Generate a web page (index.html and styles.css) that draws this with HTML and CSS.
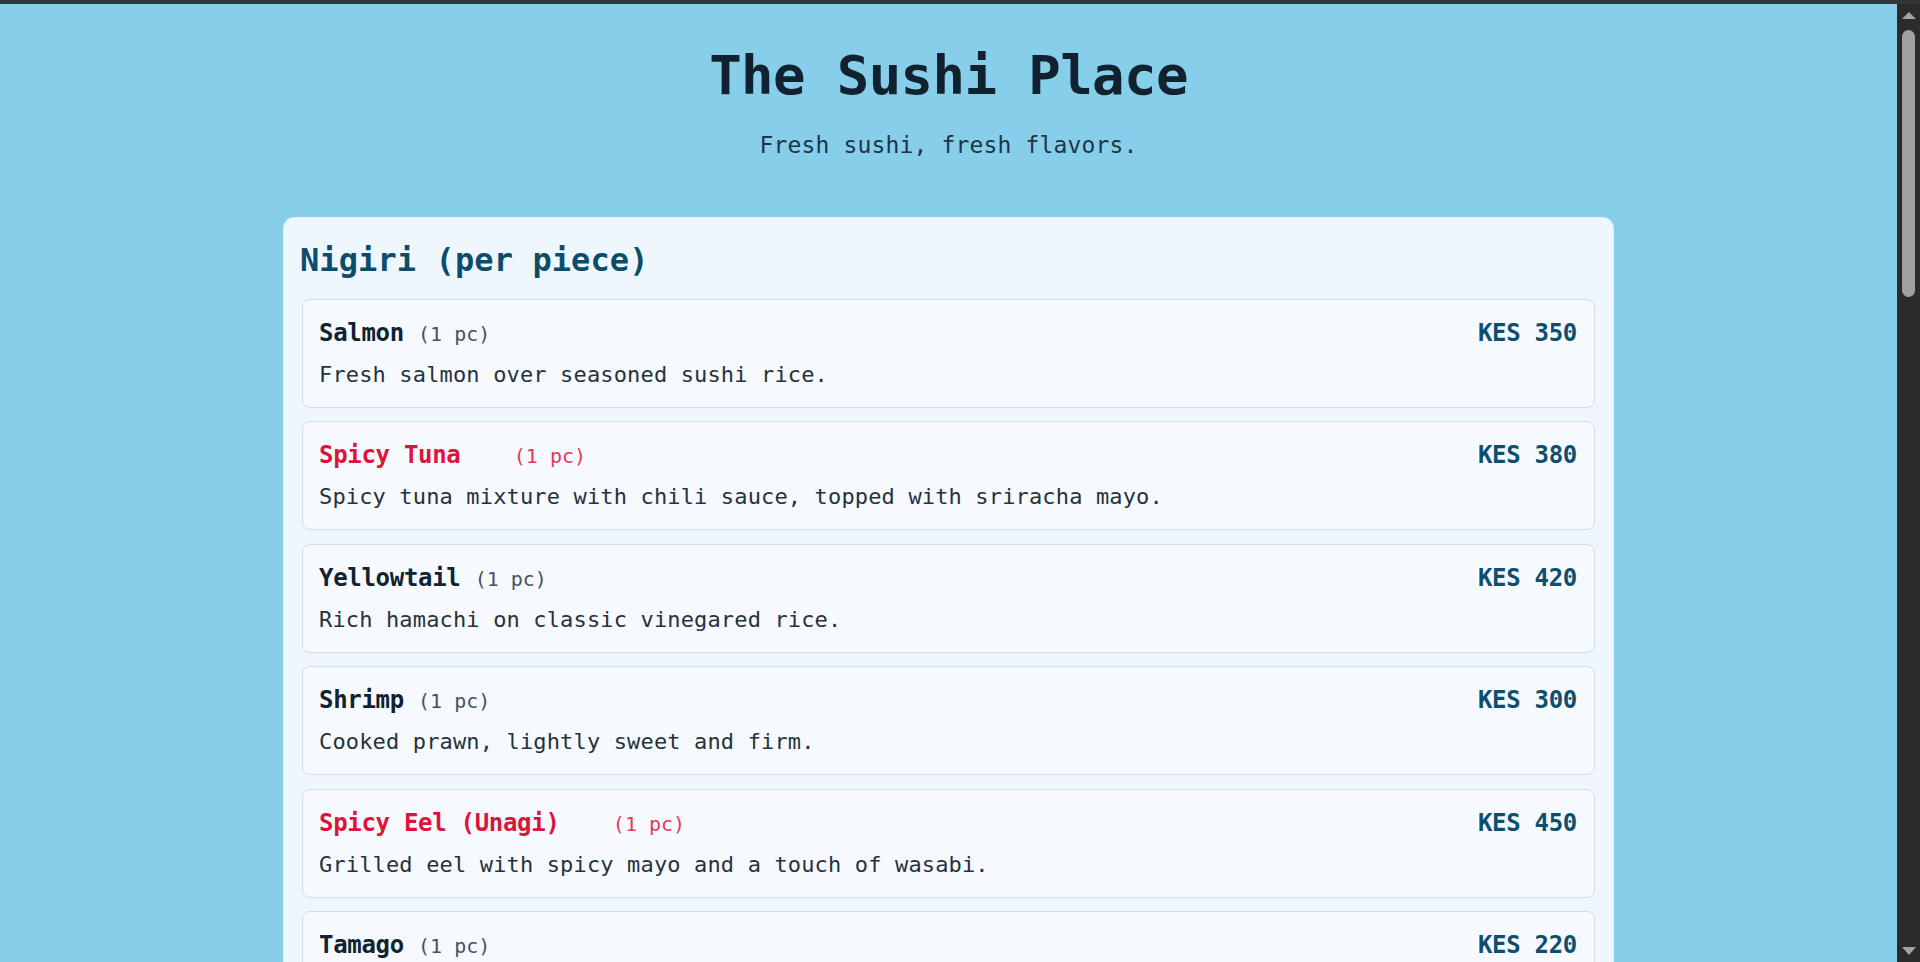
FILE: index.html
```html
<!DOCTYPE html>
<html lang="en">
<head>
<meta charset="utf-8">
<title>The Sushi Place</title>
<link rel="stylesheet" href="styles.css">
</head>
<body>
<div class="frame-top"></div>
<div class="viewport">
  <div class="page">
    <header class="site-header">
      <h1 class="site-title">The Sushi Place</h1>
      <p class="site-tagline">Fresh sushi, fresh flavors.</p>
    </header>
    <main class="menu">
      <section class="menu-section">
        <h2 class="section-title">Nigiri (per piece)</h2>
        <ul class="items">
          <li class="item">
            <div class="item-head">
              <h3 class="item-name">Salmon <span class="qty">(1 pc)</span></h3>
              <span class="price">KES 350</span>
            </div>
            <p class="desc">Fresh salmon over seasoned sushi rice.</p>
          </li>
          <li class="item spicy">
            <div class="item-head">
              <h3 class="item-name">Spicy Tuna <span class="chili"></span> <span class="qty">(1 pc)</span></h3>
              <span class="price">KES 380</span>
            </div>
            <p class="desc">Spicy tuna mixture with chili sauce, topped with sriracha mayo.</p>
          </li>
          <li class="item">
            <div class="item-head">
              <h3 class="item-name">Yellowtail <span class="qty">(1 pc)</span></h3>
              <span class="price">KES 420</span>
            </div>
            <p class="desc">Rich hamachi on classic vinegared rice.</p>
          </li>
          <li class="item">
            <div class="item-head">
              <h3 class="item-name">Shrimp <span class="qty">(1 pc)</span></h3>
              <span class="price">KES 300</span>
            </div>
            <p class="desc">Cooked prawn, lightly sweet and firm.</p>
          </li>
          <li class="item spicy">
            <div class="item-head">
              <h3 class="item-name">Spicy Eel (Unagi) <span class="chili"></span> <span class="qty">(1 pc)</span></h3>
              <span class="price">KES 450</span>
            </div>
            <p class="desc">Grilled eel with spicy mayo and a touch of wasabi.</p>
          </li>
          <li class="item">
            <div class="item-head">
              <h3 class="item-name">Tamago <span class="qty">(1 pc)</span></h3>
              <span class="price">KES 220</span>
            </div>
            <p class="desc">Sweet layered omelette over rice.</p>
          </li>
        </ul>
      </section>
    </main>
  </div>
  <div class="scrollbar">
    <span class="arrow arrow-up"></span>
    <span class="thumb"></span>
    <span class="track-rest"></span>
    <span class="arrow arrow-down"></span>
  </div>
</div>
</body>
</html>
```
FILE: styles.css
```css
* { box-sizing: border-box; }

html, body {
  margin: 0;
  padding: 0;
  height: 100%;
}

body {
  display: flex;
  flex-direction: column;
  overflow: hidden;
  font-family: "DejaVu Sans Mono", "Liberation Mono", monospace;
  background: #87ceeb;
}

.frame-top {
  height: 4px;
  flex: 0 0 4px;
  background: #34353a;
}

.viewport {
  flex: 1;
  min-height: 0;
  display: flex;
}

.page {
  flex: 1;
  min-width: 0;
  overflow: hidden;
  background: #87ceeb;
  padding-top: 40px;
}

.site-header {
  text-align: center;
}

.site-title {
  margin: 0;
  font-size: 54px;
  line-height: 64px;
  letter-spacing: -0.6px;
  font-weight: bold;
  color: #10222f;
}

.site-tagline {
  margin: 22px 0 0;
  font-size: 23px;
  line-height: 30px;
  letter-spacing: 0.15px;
  color: #1d3546;
}

.menu {
  margin-top: 57px;
}

.menu-section {
  width: 1331px;
  margin: 0 auto;
  background: #eff7fe;
  border: 1px solid #e2eef8;
  border-radius: 11px;
  padding: 18px;
}

.section-title {
  margin: 4px 0 19px -2px;
  font-size: 32px;
  line-height: 40px;
  letter-spacing: 0.1px;
  font-weight: bold;
  color: #0d4d6b;
}

.items {
  list-style: none;
  margin: 0;
  padding: 0;
  display: flex;
  flex-direction: column;
  gap: 13.4px;
}

.item {
  background: #f6faff;
  border: 1px solid #d5dde4;
  border-radius: 8px;
  padding: 18px 17px 16px 16px;
}

.item-head {
  display: flex;
  justify-content: space-between;
  align-items: baseline;
  height: 31px;
}

.item-name {
  margin: 0;
  font-size: 24px;
  line-height: 31px;
  letter-spacing: -0.3px;
  font-weight: bold;
  color: #112230;
}

.qty {
  font-size: 20px;
  line-height: 20px;
  font-weight: normal;
  letter-spacing: 0;
  color: #46525d;
}

.chili {
  display: inline-block;
  width: 25px;
  height: 1px;
}

.spicy .item-name {
  color: #dc143c;
}

.spicy .qty {
  color: #e2395c;
}

.price {
  font-size: 24px;
  line-height: 31px;
  font-weight: bold;
  letter-spacing: -0.3px;
  font-variant-numeric: slashed-zero;
  color: #0d4f6f;
}

.desc {
  margin: 10px 0 0;
  font-size: 22px;
  line-height: 32px;
  letter-spacing: 0.15px;
  color: #26323c;
}

.scrollbar {
  flex: 0 0 23px;
  width: 23px;
  background: #2b2b2b;
  display: flex;
  flex-direction: column;
  align-items: center;
}

.arrow {
  width: 0;
  height: 0;
  border-left: 7.5px solid transparent;
  border-right: 7.5px solid transparent;
}

.arrow-up {
  margin-top: 8px;
  border-bottom: 7px solid #a3a3a3;
}

.arrow-down {
  margin-bottom: 7px;
  border-top: 8px solid #a3a3a3;
}

.thumb {
  margin-top: 11px;
  width: 13px;
  height: 267px;
  border-radius: 7px;
  background: #a0a0a0;
}

.track-rest {
  flex: 1;
}
```
